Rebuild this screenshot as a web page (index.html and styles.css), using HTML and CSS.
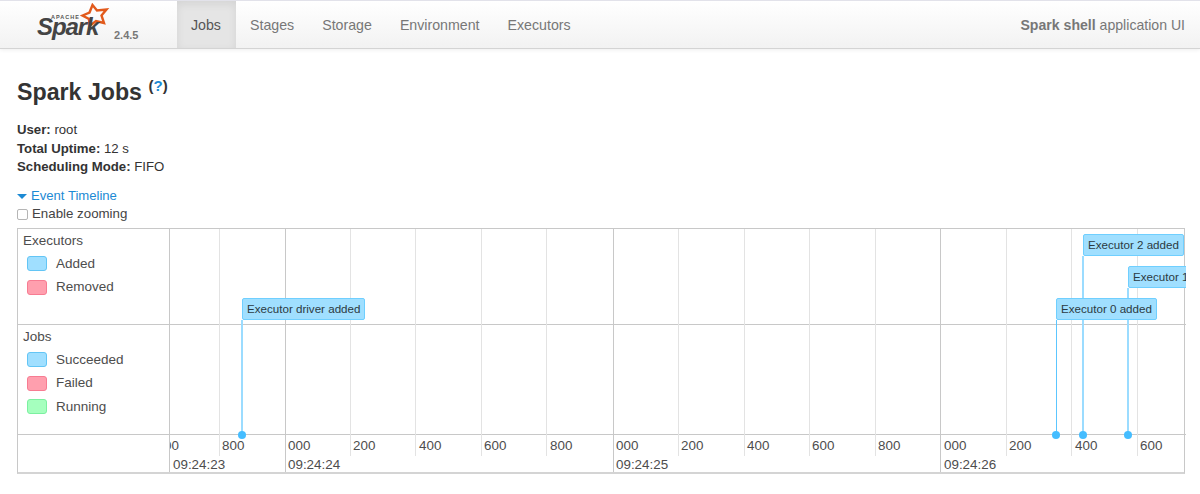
FILE: index.html
```html
<!DOCTYPE html>
<html lang="en">
<head>
<meta charset="utf-8">
<title>Spark Jobs</title>
<link rel="stylesheet" href="styles.css">
</head>
<body>
<nav class="navbar">
  <a class="brand" href="#">
    <svg class="logo" width="80" height="40" viewBox="0 0 80 40" aria-hidden="true">
      <path class="star" d="M56.500 2 L61 7.500 L70.500 6.500 L65.500 12.500 L68 20 L60 18 L53.500 23 L53 16 L46.500 12.500 L53.500 9.500 Z"/>
      <text class="logo-apache" x="15" y="15.500">APACHE</text>
      <text class="logo-spark" x="1" y="32">Spark</text>
    </svg>
    <span class="version">2.4.5</span>
  </a>
  <ul class="tabs">
    <li class="tab active">Jobs</li>
    <li class="tab">Stages</li>
    <li class="tab">Storage</li>
    <li class="tab">Environment</li>
    <li class="tab">Executors</li>
  </ul>
  <p class="app-name"><strong>Spark shell</strong> application UI</p>
</nav>

<main class="content">
  <h3 class="title">Spark Jobs <sup class="help">(<a href="#">?</a>)</sup></h3>
  <ul class="summary">
    <li><strong>User:</strong> root</li>
    <li><strong>Total Uptime:</strong> 12 s</li>
    <li><strong>Scheduling Mode:</strong> FIFO</li>
  </ul>
  <a class="timeline-toggle" href="#"><span class="arrow"></span>Event Timeline</a>
  <label class="zoom-toggle"><span class="checkbox"></span>Enable zooming</label>

  <section class="timeline">
    <div class="legend legend-executors">
      <div class="legend-title">Executors</div>
      <div class="legend-row"><span class="swatch blue"></span>Added</div>
      <div class="legend-row"><span class="swatch red"></span>Removed</div>
    </div>
    <div class="legend legend-jobs">
      <div class="legend-title">Jobs</div>
      <div class="legend-row"><span class="swatch blue"></span>Succeeded</div>
      <div class="legend-row"><span class="swatch red"></span>Failed</div>
      <div class="legend-row"><span class="swatch green"></span>Running</div>
    </div>
    <div class="legend-corner"></div>

    <div class="canvas">
      <div class="divider row-a"></div>
      <div class="divider row-b"></div>

      <i class="grid minor" style="left:49px"></i>
      <i class="grid major" style="left:115px"></i>
      <i class="grid minor" style="left:180px"></i>
      <i class="grid minor" style="left:245px"></i>
      <i class="grid minor" style="left:311px"></i>
      <i class="grid minor" style="left:376px"></i>
      <i class="grid major" style="left:443px"></i>
      <i class="grid minor" style="left:508px"></i>
      <i class="grid minor" style="left:574px"></i>
      <i class="grid minor" style="left:639px"></i>
      <i class="grid minor" style="left:705px"></i>
      <i class="grid major" style="left:770px"></i>
      <i class="grid minor" style="left:836px"></i>
      <i class="grid minor" style="left:901px"></i>
      <i class="grid minor" style="left:967px"></i>

      <span class="tick" style="left:-6px">00</span>
      <span class="tick" style="left:52px">800</span>
      <span class="tick" style="left:118px">000</span>
      <span class="tick" style="left:183px">200</span>
      <span class="tick" style="left:249px">400</span>
      <span class="tick" style="left:314px">600</span>
      <span class="tick" style="left:380px">800</span>
      <span class="tick" style="left:446px">000</span>
      <span class="tick" style="left:511px">200</span>
      <span class="tick" style="left:577px">400</span>
      <span class="tick" style="left:642px">600</span>
      <span class="tick" style="left:708px">800</span>
      <span class="tick" style="left:774px">000</span>
      <span class="tick" style="left:839px">200</span>
      <span class="tick" style="left:905px">400</span>
      <span class="tick" style="left:970px">600</span>

      <span class="time" style="left:3px">09:24:23</span>
      <span class="time" style="left:118px">09:24:24</span>
      <span class="time" style="left:446px">09:24:25</span>
      <span class="time" style="left:774px">09:24:26</span>

      <i class="stem stem-low" style="left:71px"></i><i class="dot" style="left:68px"></i>
      <i class="stem stem-low stem-thin" style="left:886px"></i><i class="dot" style="left:882px"></i>
      <i class="stem stem-top" style="left:912px"></i><i class="dot" style="left:909px"></i>
      <i class="stem stem-mid" style="left:957px"></i><i class="dot" style="left:954px"></i>

      <div class="event level-low" style="left:72px">Executor driver added</div>
      <div class="event level-top" style="left:913px">Executor 2 added</div>
      <div class="event level-mid" style="left:958px">Executor 1 added</div>
      <div class="event level-low" style="left:886px">Executor 0 added</div>
    </div>
  </section>
</main>
</body>
</html>
```
FILE: styles.css
```css
* { box-sizing: border-box; }
html, body { margin: 0; padding: 0; }
body {
  width: 1200px;
  height: 494px;
  overflow: hidden;
  background: #fff;
  color: #333;
  font-family: "Liberation Sans", Arial, sans-serif;
  font-size: 14px;
  line-height: 20px;
}
a { color: #1c8ad4; text-decoration: none; }
ul { list-style: none; margin: 0; padding: 0; }

.navbar {
  display: flex;
  align-items: stretch;
  height: 49px;
  border-top: 1px solid #e2e2ea;
  border-bottom: 1px solid #d4d4d4;
  background: linear-gradient(#ffffff, #f2f2f2);
  box-shadow: 0 1px 4px rgba(0, 0, 0, .07);
}
.brand {
  display: flex;
  width: 177px;
  padding: 2px 0 0 36px;
}
.logo { display: block; flex: none; }
.logo .star { fill: none; stroke: #e25a1c; stroke-width: 2.4; stroke-linejoin: miter; }
.logo-spark {
  font-size: 24px;
  font-weight: 700;
  font-style: italic;
  letter-spacing: -1.100px;
  fill: #444;
}
.logo-apache {
  font-size: 5.500px;
  font-weight: 700;
  letter-spacing: 1px;
  fill: #555;
}
.version {
  margin: 25px 0 0 -2px;
  color: #777;
  font-size: 11px;
  font-weight: 700;
  line-height: 14px;
}
.tabs { display: flex; }
.tab {
  padding: 14px 14px 0;
  color: #777;
  font-size: 14.200px;
}
.tab.active {
  width: 59px;
  color: #555;
  background: #e5e5e5;
  box-shadow: inset 0 3px 8px rgba(0, 0, 0, .08);
}
.app-name {
  margin: 0 0 0 auto;
  padding: 14px 15px 0 0;
  color: #777;
  font-size: 14.100px;
}

.content { padding: 0 15px 0 17px; }
.title {
  margin: 25px 0 0;
  font-size: 23.200px;
  line-height: 36px;
  font-weight: 700;
}
.help {
  font-size: 15px;
  line-height: 0;
  vertical-align: 9px;
}
.help a { font-weight: 700; }
.summary { margin-top: 11px; }
.summary li { height: 18.500px; line-height: 18.500px; font-size: 13.200px; }
.timeline-toggle {
  display: flex;
  align-items: center;
  margin-top: 10px;
  height: 18px;
  font-size: 13.100px;
}
.arrow {
  width: 0;
  height: 0;
  margin: 1px 4px 0 0;
  border-left: 5px solid transparent;
  border-right: 5px solid transparent;
  border-top: 5px solid #1c8ad4;
}
.zoom-toggle {
  display: flex;
  align-items: center;
  height: 20px;
  margin-top: -1px;
  color: #444;
  font-size: 13.300px;
}
.checkbox {
  width: 11px;
  height: 11px;
  margin: 2px 4px 0 0;
  border: 1px solid #b5b5b5;
  border-radius: 2px;
  background: #fff;
}

.timeline {
  display: grid;
  grid-template-columns: 152px 1016px;
  grid-template-rows: 95px 110px 38px;
  width: 1168px;
  height: 246px;
  margin-top: 4px;
  border: 1px solid #c8c8c8;
  border-bottom-width: 2px;
  border-bottom-color: #d4d4d4;
  color: #4d4d4d;
}
.legend {
  grid-column: 1;
  padding: 3px 0 0 5px;
  border-right: 1px solid #c8c8c8;
  font-size: 13.500px;
}
.legend-jobs { border-top: 1px solid #c8c8c8; }
.legend-corner {
  grid-column: 1;
  border-top: 1px solid #c8c8c8;
  border-right: 1px solid #c8c8c8;
}
.legend-title { height: 18px; line-height: 18px; }
.legend-row {
  display: flex;
  align-items: center;
  gap: 9px;
  height: 23.600px;
  padding-left: 4px;
}
.legend-title + .legend-row { margin-top: 2.500px; }
.swatch {
  width: 20px;
  height: 15px;
  border: 1px solid;
  border-radius: 3px;
}
.swatch.blue { background: #a0dfff; border-color: #63c5f5; }
.swatch.red { background: #ff9fae; border-color: #f77c92; }
.swatch.green { background: #a5ffbe; border-color: #7cf0a0; }

.canvas {
  grid-column: 2;
  grid-row: 1 / 4;
  position: relative;
  overflow: hidden;
}
.divider {
  position: absolute;
  left: 0;
  right: 0;
  height: 1px;
  background: #c8c8c8;
}
.row-a { top: 95px; }
.row-b { top: 205px; }
.grid {
  position: absolute;
  top: 0;
  width: 1px;
}
.grid.minor { height: 227px; background: #e3e3e3; }
.grid.major { height: 245px; background: #c8c8c8; }
.tick, .time {
  position: absolute;
  font-size: 13.400px;
  line-height: 18px;
  color: #4d4d4d;
  white-space: nowrap;
}
.tick { top: 208px; }
.time { top: 227px; }
.stem {
  position: absolute;
  width: 2px;
  background: #9bdcff;
}
.stem-thin { width: 1px; background: #5cc6ff; }
.stem-low { top: 91px; height: 115px; }
.stem-mid { top: 59px; height: 147px; }
.stem-top { top: 27px; height: 179px; }
.dot {
  position: absolute;
  top: 202px;
  width: 8px;
  height: 8px;
  border-radius: 50%;
  background: #45bdff;
}
.event {
  position: absolute;
  height: 22px;
  padding: 0 4px;
  border: 1px solid #6fcfff;
  border-radius: 2px;
  background: #a0dfff;
  color: #2c3a42;
  font-size: 11.600px;
  line-height: 20px;
  white-space: nowrap;
}
.level-top { top: 5px; }
.level-mid { top: 37px; }
.level-low { top: 69px; }
```
